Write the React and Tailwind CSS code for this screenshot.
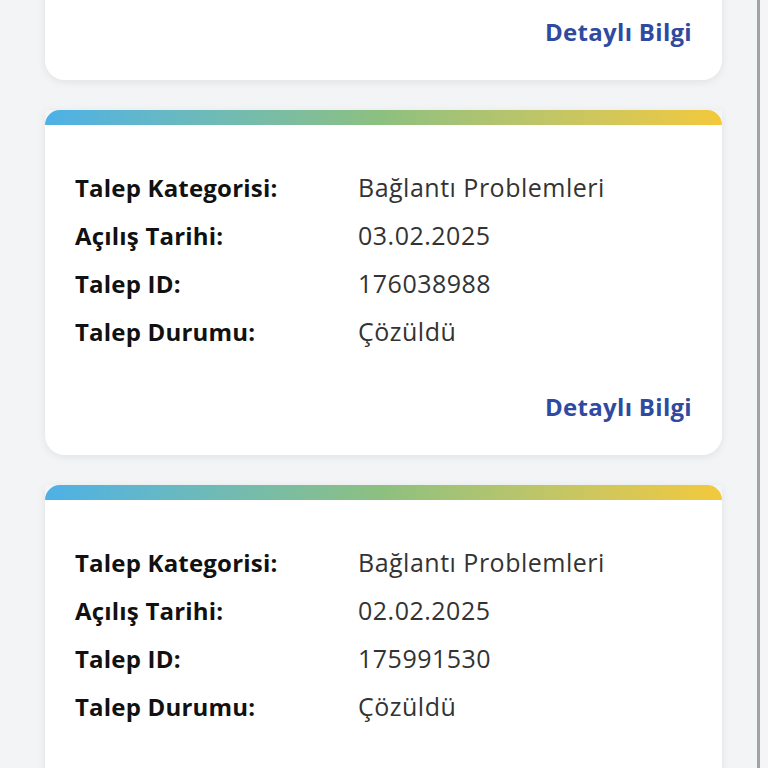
import React from 'react';

const TICKETS = [
    { category: 'Bağlantı Problemleri', date: '04.02.2025', id: '176101245', status: 'Çözüldü' },
    { category: 'Bağlantı Problemleri', date: '03.02.2025', id: '176038988', status: 'Çözüldü' },
    { category: 'Bağlantı Problemleri', date: '02.02.2025', id: '175991530', status: 'Çözüldü' },
];

function Row({ label, value }) {
    return (
        <div className="flex h-[48px] items-center">
            <span className="w-[283px] shrink-0 text-[24px] font-bold tracking-[0.2px] text-[#111111]">{label}</span>
            <span className="text-[25px] tracking-[0.5px] text-[#333333]">{value}</span>
        </div>
    );
}

function TicketCard({ ticket }) {
    return (
        <div className="rounded-b-[20px] shadow-[0_2px_8px_rgba(0,0,0,0.08)]">
            {/* colored strip on top */}
            <div className="h-[15px] rounded-t-[20px] bg-gradient-to-r from-[#4db1e6] via-[#8dc07f] to-[#f2c93a]" />
            <div className="rounded-b-[20px] bg-white px-[30px] pt-[39px] pb-[24px]">
                <Row label="Talep Kategorisi:" value={ticket.category} />
                <Row label="Açılış Tarihi:" value={ticket.date} />
                <Row label="Talep ID:" value={ticket.id} />
                <Row label="Talep Durumu:" value={ticket.status} />
                <div className="mt-[27px] flex h-[48px] items-center justify-end">
                    <span className="font-bold tracking-[0.3px] text-[#2f4aa0]">Detaylı Bilgi</span>
                </div>
            </div>
        </div>
    );
}

export default function App() {
    return (
        <div
            className="flex h-[768px] w-[768px] overflow-hidden bg-[#f3f4f6] text-[24px]"
            style={{ fontFamily: '"Open Sans", "Noto Sans", sans-serif' }}
        >
            <div className="w-[757px] shrink-0 pl-[45px] pr-[35px]">
                <div className="-mt-[265px] flex flex-col gap-[30px]">
                    {TICKETS.map((t) => (
                        <TicketCard key={t.id} ticket={t} />
                    ))}
                </div>
            </div>
            <div className="w-[3px] shrink-0 bg-[#a3a3a3]" />
            <div className="flex-1 bg-[#f5f5f7]" />
        </div>
    );
}
